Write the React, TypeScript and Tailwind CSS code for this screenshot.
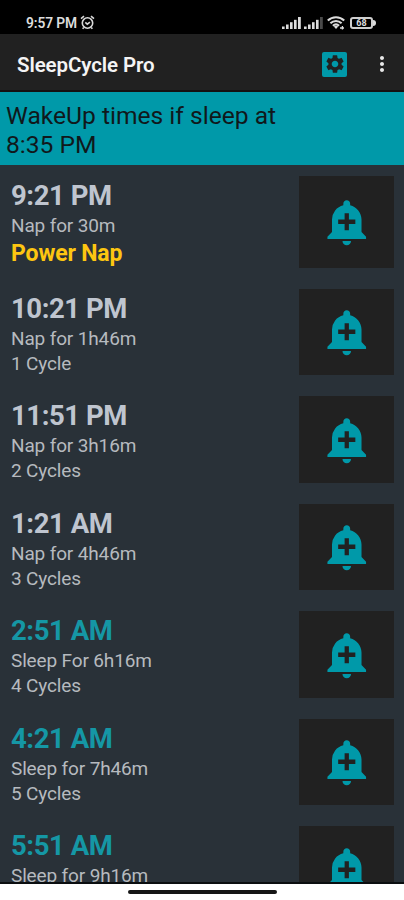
import { MdAddAlert, MdMoreVert, MdSettings } from 'react-icons/md';

type WakeTime = {
  time: string;
  duration: string;
  cycles?: string;
  kind: 'power' | 'nap' | 'sleep';
};

const wakeTimes: WakeTime[] = [
  { time: '9:21 PM', duration: 'Nap for 30m', cycles: 'Power Nap', kind: 'power' },
  { time: '10:21 PM', duration: 'Nap for 1h46m', cycles: '1 Cycle', kind: 'nap' },
  { time: '11:51 PM', duration: 'Nap for 3h16m', cycles: '2 Cycles', kind: 'nap' },
  { time: '1:21 AM', duration: 'Nap for 4h46m', cycles: '3 Cycles', kind: 'nap' },
  { time: '2:51 AM', duration: 'Sleep For 6h16m', cycles: '4 Cycles', kind: 'sleep' },
  { time: '4:21 AM', duration: 'Sleep for 7h46m', cycles: '5 Cycles', kind: 'sleep' },
  { time: '5:51 AM', duration: 'Sleep for 9h16m', kind: 'sleep' },
];

function AlarmIcon() {
  return (
    <svg width="15" height="15" viewBox="0 0 15 15" fill="none" stroke="#d8d8d8" strokeWidth="1.6" className="mb-[2px]">
      <circle cx="7.5" cy="8" r="5.2" />
      <path d="M5.3 7.4l2 1.8 2.6-2M1 3.6L4 1.2M14 3.6L11 1.2M3.8 12.4l-1.2 1.4M11.2 12.4l1.2 1.4" />
    </svg>
  );
}

function SignalIcon({ weak = false }: { weak?: boolean }) {
  return (
    <svg width="19" height="12" viewBox="0 0 19 12" fill="#dcdcdc">
      <rect x="0" y="9.5" width="2.6" height="2.5" />
      <rect x="4" y="7.5" width="2.6" height="4.5" />
      <rect x="8" y="5.2" width="2.6" height="6.8" />
      <rect x="12" y="2.8" width="2.6" height="9.2" />
      <rect x="16" y="0" width="2.8" height="12" fill={weak ? '#4a4a4a' : '#dcdcdc'} />
    </svg>
  );
}

function WifiIcon() {
  return (
    <svg width="18" height="14" viewBox="0 0 18 14" fill="none" stroke="#dcdcdc" strokeWidth="2.1">
      <path d="M.8 4.6c4.6-4.4 11.8-4.4 16.4 0M3.4 7.3c3.2-3 8-3 11.2 0M5.9 9.8c1.8-1.6 4.4-1.6 6.2 0" />
      <path d="M6.8 10.6L9 13l2.2-2.4C10 9.6 8 9.6 6.8 10.6z" fill="#dcdcdc" stroke="none" />
      <path d="M13 12h4M15.4 10v3.6" strokeWidth="1.3" />
    </svg>
  );
}

function BatteryIcon() {
  return (
    <div className="flex items-center">
      <div className="flex h-[12px] w-[23px] items-center justify-center rounded-[3px] border-2 border-[#cfcfcf] text-[9px] leading-none font-bold">
        68
      </div>
      <div className="h-[6px] w-[3px] rounded-r-full bg-[#dcdcdc]" />
    </div>
  );
}

function StatusBar() {
  return (
    <div className="flex h-[34px] shrink-0 items-start justify-between bg-black pt-[15px] pr-[28px] pl-[26px] text-[#dcdcdc]">
      <div className="flex h-[16px] items-center gap-[3px]">
        <span className="text-[13.8px] leading-[16px] font-semibold tracking-[-0.1px]">9:57 PM</span>
        <AlarmIcon />
      </div>
      <div className="flex h-[16px] items-center">
        <SignalIcon />
        <div className="w-[3px]" />
        <SignalIcon weak />
        <div className="w-[4px]" />
        <WifiIcon />
        <div className="w-[5px]" />
        <BatteryIcon />
      </div>
    </div>
  );
}

function WakeRow({ item }: { item: WakeTime }) {
  const power = item.kind === 'power';
  return (
    <div className={`flex shrink-0 justify-between pt-[10.5px] pr-[10px] pl-[11px] ${power ? 'h-[113px]' : 'h-[107.6px]'}`}>
      <div className="flex flex-col text-[19px] leading-[25px] tracking-[-0.14px] text-[#b6babf]">
        <h2
          className={`pt-[3px] text-[27.5px] leading-[34px] font-bold tracking-[-0.45px] ${item.kind === 'sleep' ? 'text-[#1597a5]' : 'text-[#bfc5cf]'}`}
        >
          {item.time}
        </h2>
        <p>{item.duration}</p>
        {power ? (
          <p className="text-[23px] leading-[31px] font-bold text-[#fdc611]">{item.cycles}</p>
        ) : (
          item.cycles && <p>{item.cycles}</p>
        )}
      </div>
      <button
        className={`flex w-[95.5px] items-center justify-center bg-[#212121] text-[#0099a9] ${power ? 'h-[92px]' : 'h-[86.5px]'}`}
      >
        <MdAddAlert size={51.5} />
      </button>
    </div>
  );
}

export default function App() {
  return (
    <div className="flex h-[900px] w-[404px] flex-col overflow-hidden bg-[#293138] font-[Roboto,sans-serif]">
      <StatusBar />

      {/* App bar */}
      <header className="flex h-[58px] shrink-0 items-center border-b-2 border-[#151011] bg-[#212121] pt-[4px] pr-[10px] pl-[17px]">
        <h1 className="flex-1 pt-[2px] text-[20.5px] font-semibold tracking-[-0.1px] text-[#f4f4f4]">SleepCycle Pro</h1>
        <div className="mr-[23px] flex h-[25px] w-[25px] items-center justify-center rounded-[2px] bg-[#0099a9] text-[#212121]">
          <MdSettings size={22} />
        </div>
        <MdMoreVert size={24} className="text-[#e8e8e8]" />
      </header>

      <div className="h-[73px] shrink-0 bg-[#0099a9] px-[6px] pt-[9px] text-[24.6px] leading-[29px] text-[#10181b]">
        <p>
          WakeUp times if sleep at
          <br />
          8:35 PM
        </p>
      </div>

      {/* Wake up times */}
      <div className="flex flex-1 flex-col overflow-hidden">
        {wakeTimes.map((item) => (
          <WakeRow key={item.time} item={item} />
        ))}
      </div>

      {/* Gesture bar */}
      <div className="flex h-[18px] shrink-0 justify-center border-t-2 border-[#0b0e10] bg-white pt-[6px]">
        <div className="h-[4px] w-[149px] rounded-full bg-[#161616]" />
      </div>
    </div>
  );
}
